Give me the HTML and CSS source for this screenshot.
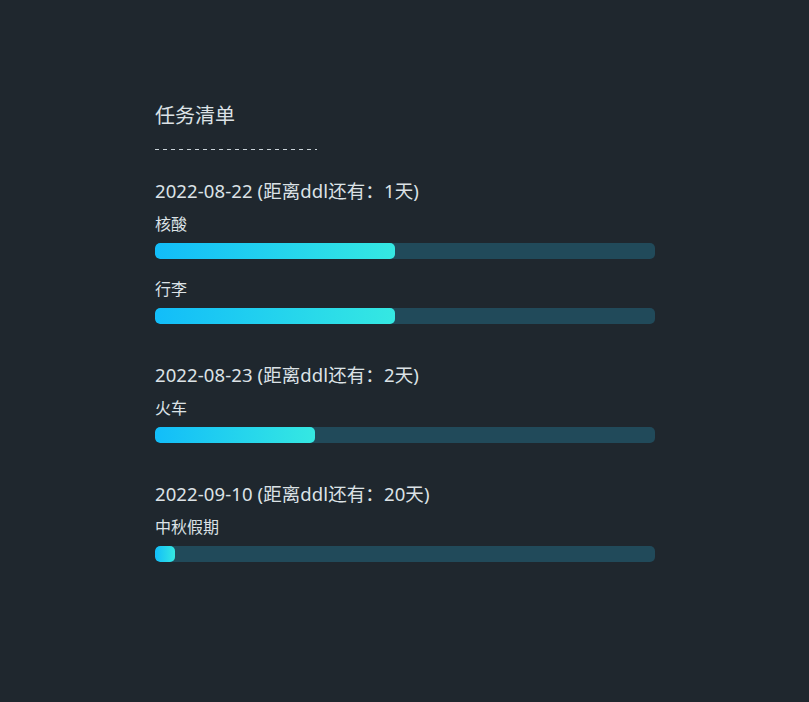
FILE: index.html
```html
<!DOCTYPE html>
<html lang="zh-CN">
<head>
<meta charset="utf-8">
<title>任务清单</title>
<link rel="stylesheet" href="styles.css">
</head>
<body>
<main class="list">
  <h1 class="title">任务清单</h1>
  <div class="dash"></div>

  <section class="group">
    <h2 class="date">2022-08-22 (距离ddl还有：1天)</h2>
    <div class="item">
      <div class="label">核酸</div>
      <div class="track"><div class="fill" style="width:48%"></div></div>
    </div>
    <div class="item">
      <div class="label">行李</div>
      <div class="track"><div class="fill" style="width:48%"></div></div>
    </div>
  </section>

  <section class="group">
    <h2 class="date">2022-08-23 (距离ddl还有：2天)</h2>
    <div class="item">
      <div class="label">火车</div>
      <div class="track"><div class="fill" style="width:32%"></div></div>
    </div>
  </section>

  <section class="group">
    <h2 class="date">2022-09-10 (距离ddl还有：20天)</h2>
    <div class="item">
      <div class="label">中秋假期</div>
      <div class="track"><div class="fill" style="width:4%"></div></div>
    </div>
  </section>
</main>
</body>
</html>
```
FILE: styles.css
```css
html, body {
  margin: 0;
  padding: 0;
  background: #1f272e;
  min-height: 100%;
}
body {
  font-family: "Noto Sans", "Noto Sans CJK SC", sans-serif;
  color: #dce2e6;
}
.list {
  width: 500px;
  padding: 102px 0 0 155px;
  display: flex;
  flex-direction: column;
}
.title {
  margin: 0;
  font-size: 20px;
  line-height: 28px;
  font-weight: 400;
}
.dash {
  margin-top: 19px;
  width: 162px;
  height: 1px;
  background: repeating-linear-gradient(to right, #c9d2d8 0 4px, transparent 4px 8px);
}
.group {
  display: flex;
  flex-direction: column;
  margin-top: 38px;
}
.dash + .group {
  margin-top: 28px;
}
.date {
  margin: 0;
  font-size: 18.5px;
  line-height: 26px;
  font-weight: 400;
  letter-spacing: 0.1px;
}
.item {
  display: flex;
  flex-direction: column;
  margin-top: 18px;
}
.date + .item {
  margin-top: 8px;
}
.label {
  font-size: 16px;
  line-height: 24px;
}
.track {
  margin-top: 7px;
  height: 16px;
  border-radius: 5px;
  background: #214a5a;
  overflow: hidden;
}
.fill {
  height: 100%;
  border-radius: 5px;
  background: linear-gradient(to right, #12bdf9, #35e8e2);
}
```
